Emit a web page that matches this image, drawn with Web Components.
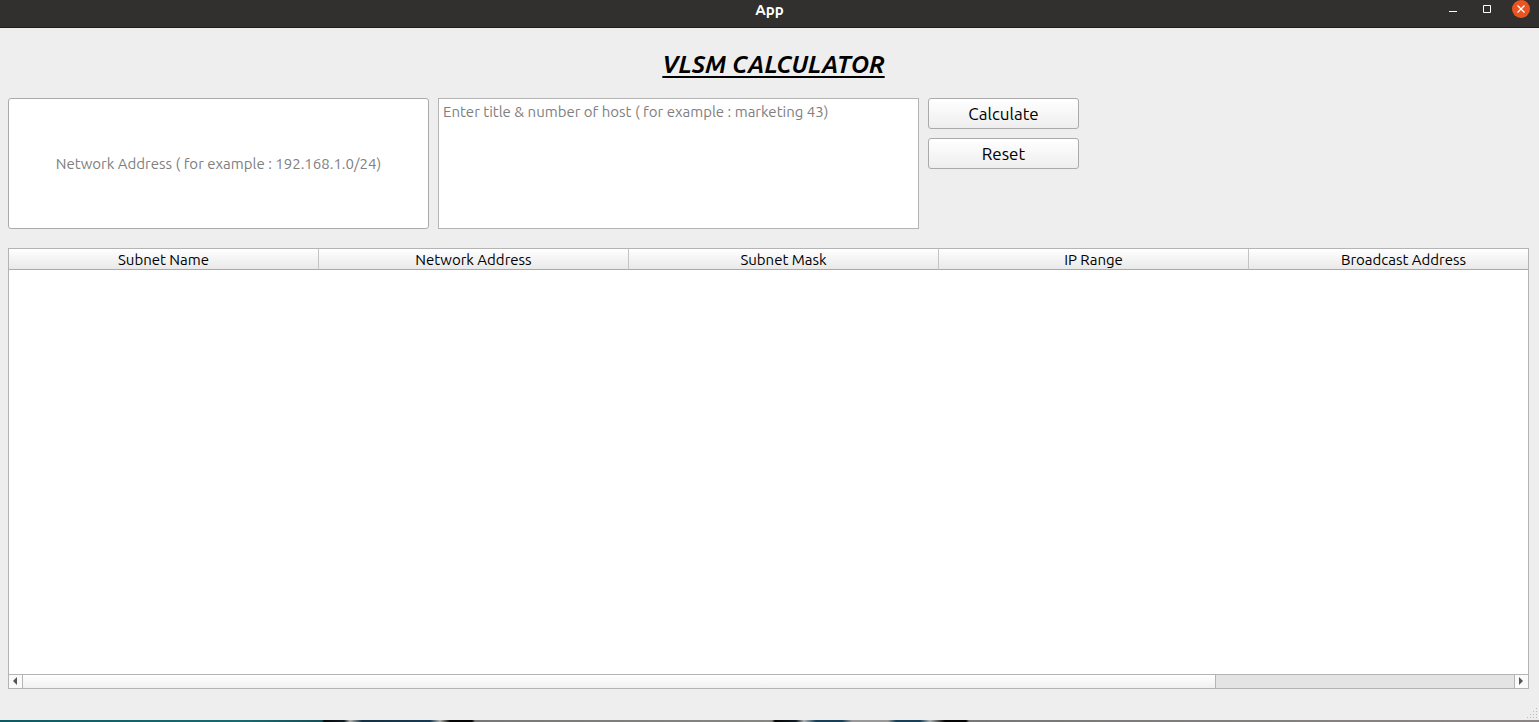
<!DOCTYPE html>
<html lang="en">
<head>
<meta charset="utf-8">
<title>App</title>
<style>
  html, body { margin: 0; height: 100%; }
  body { font: 15px/20px "Ubuntu", "Noto Sans", "Open Sans", sans-serif; color: #000; }
</style>
</head>
<body>
<app-window heading="App">
  <vlsm-calculator></vlsm-calculator>
</app-window>

<template id="window-template">
  <style>
    :host { display: flex; flex-direction: column; min-height: 100vh; background: #eee; }
    header { display: grid; grid-template-columns: 1fr auto 1fr; box-sizing: border-box; height: 28px;
      background: #32302e; border-bottom: 1px solid #1e1d1b; color: #fff; }
    h1 { grid-column: 2; margin: 0; font-size: 15px; line-height: 20px; font-weight: 700; }
    nav { display: flex; justify-content: flex-end; gap: 16px; padding-right: 9px; }
    button { width: 18px; height: 18px; padding: 0; border: 0; background: none; display: block; }
    svg { display: block; }
    main { flex: 1; display: flex; flex-direction: column; }
    footer { display: flex; justify-content: flex-end; height: 12px; }
    .desktop { height: 2px; background: linear-gradient(90deg, #0e5a63 0, #176a70 240px, #164f58 322px, #060a0c 324px, #101c24 344px,
      #b5b5b0 350px, #143044 362px, #173a52 430px, #b5b5b0 440px, #050505 450px, #050505 472px, #777 475px, #868683 772px, #050505 775px,
      #101c24 796px, #b0b5b5 804px, #173f57 816px, #173f57 842px, #999 852px, #999 888px, #173f57 896px, #173f57 920px, #b0b5b5 930px,
      #050505 945px, #050505 966px, #777 969px, #8b8685 100%); }
  </style>
  <header>
    <h1></h1>
    <nav aria-label="Window controls">
      <button aria-label="Minimise"><svg width="18" height="18"><path d="M5 11.5h8" stroke="#fff"/></svg></button>
      <button aria-label="Maximise"><svg width="18" height="18"><path d="M5.500 5.500h7v7h-7z" fill="none" stroke="#fff"/></svg></button>
      <button aria-label="Close"><svg width="18" height="18"><circle cx="9" cy="9" r="9" fill="#e95420"/><path d="M5.500 5.500l7 7m0-7l-7 7" stroke="#fff" stroke-width="1.300"/></svg></button>
    </nav>
  </header>
  <main><slot></slot></main>
  <footer>
    <svg width="13" height="12" fill="#bbb"><path d="M10 0h1v1h-1zM7 3h1v1h-1zM10 3h1v1h-1zM4 6h1v1h-1zM7 6h1v1h-1zM10 6h1v1h-1zM1 9h1v1h-1zM4 9h1v1h-1zM7 9h1v1h-1zM10 9h1v1h-1z"/></svg>
  </footer>
  <div class="desktop"></div>
</template>

<template id="calculator-template">
  <style>
    :host { flex: 1; display: flex; flex-direction: column; padding: 20px 10px 19px 8px; }
    h2 { margin: 0 0 16px; padding-left: 10px; text-align: center; font-size: 24px; line-height: 34px; font-weight: 700; font-style: italic;
      text-decoration: underline; text-decoration-thickness: 2px; text-underline-offset: 3px; text-decoration-skip-ink: none; }
    form { display: flex; align-items: flex-start; gap: 9px; margin: 0 0 19px; }
    input, textarea { box-sizing: border-box; height: 131px; margin: 0; border: 1px solid #aaa; background: #fff; color: #000;
      font: inherit; outline: 0; }
    input { width: 421px; border-radius: 3px; padding: 0 4px; text-align: center; }
    textarea { width: 481px; padding: 3px 4px; resize: none; display: block; border-color: #b4b4b4; }
    ::placeholder { color: #808080; opacity: 1; }
    .actions { display: grid; gap: 9px; width: 151px; }
    subnet-table { flex: 1; }
  </style>
  <h2>VLSM CALCULATOR</h2>
  <form>
    <input type="text" aria-label="Network address" placeholder="Network Address ( for example : 192.168.1.0/24)">
    <textarea aria-label="Hosts" placeholder="Enter title &amp; number of host ( for example : marketing 43)"></textarea>
    <div class="actions">
      <push-button>Calculate</push-button>
      <push-button>Reset</push-button>
    </div>
  </form>
  <subnet-table columns="Subnet Name|Network Address|Subnet Mask|IP Range|Broadcast Address"></subnet-table>
</template>

<template id="button-template">
  <style>
    :host { display: block; }
    button { display: block; box-sizing: border-box; width: 100%; height: 31px; padding: 0; border: 1px solid #aaa; border-radius: 3px;
      background: linear-gradient(#fff, #eee); color: #000; font: inherit; font-size: 17px; line-height: 28px; }
  </style>
  <button type="button"><slot></slot></button>
</template>

<template id="table-template">
  <style>
    :host { display: flex; flex-direction: column; border: 1px solid #b4b4b4; background: #fff; }
    .view { flex: 1; overflow: hidden; }
    table { table-layout: fixed; border-collapse: separate; border-spacing: 0; width: 1550px; }
    th { box-sizing: border-box; width: 310px; height: 21px; padding: 2px 0 0; border-right: 1px solid #c4c4c4; border-bottom: 1px solid #aaa;
      background: linear-gradient(#fff, #e9e9e9); font-weight: 400; line-height: 18px; }
  </style>
  <div class="view"><table><thead><tr></tr></thead><tbody></tbody></table></div>
  <scroll-bar></scroll-bar>
</template>

<template id="scroll-template">
  <style>
    :host { display: flex; height: 14px; border-top: 1px solid #b4b4b4; background: #e4e4e4; box-sizing: border-box; }
    button { width: 14px; padding: 0; border: 0; background: #fafafa; }
    svg { display: block; }
    .back { border-right: 1px solid #b4b4b4; }
    .next { border-left: 1px solid #b4b4b4; }
    .track { flex: 1; display: flex; }
    .thumb { box-sizing: border-box; width: 80%; border-right: 1px solid #b4b4b4; background: linear-gradient(#fff, #f0f0f0); }
  </style>
  <button class="back" aria-label="Scroll left"><svg width="13" height="13"><path d="M8 2v8L4 6z" fill="#555"/></svg></button>
  <div class="track"><div class="thumb"></div></div>
  <button class="next" aria-label="Scroll right"><svg width="13" height="13"><path d="M4 2v8l4-4z" fill="#555"/></svg></button>
</template>

<script>
  class TemplateElement extends HTMLElement {
    constructor() {
      super();
      this.attachShadow({ mode: "open" })
        .append(document.getElementById(this.constructor.template).content.cloneNode(true));
    }
  }
  customElements.define("push-button", class extends TemplateElement {
    static template = "button-template";
  });
  customElements.define("scroll-bar", class extends TemplateElement {
    static template = "scroll-template";
  });
  customElements.define("subnet-table", class extends TemplateElement {
    static template = "table-template";
    connectedCallback() {
      this.shadowRoot.querySelector("tr").replaceChildren(...this.getAttribute("columns").split("|").map(name => {
        const th = document.createElement("th");
        th.scope = "col";
        th.textContent = name;
        return th;
      }));
    }
  });
  customElements.define("vlsm-calculator", class extends TemplateElement {
    static template = "calculator-template";
  });
  customElements.define("app-window", class extends TemplateElement {
    static template = "window-template";
    connectedCallback() {
      this.shadowRoot.querySelector("h1").textContent = this.getAttribute("heading");
    }
  });
</script>
</body>
</html>
